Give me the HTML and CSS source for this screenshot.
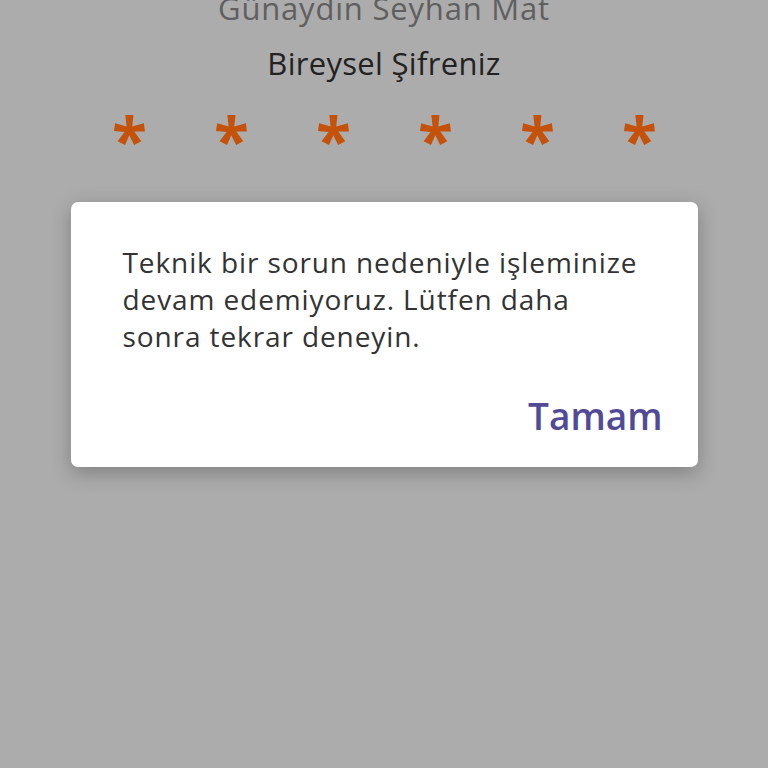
FILE: index.html
```html
<!DOCTYPE html>
<html lang="tr">
<head>
    <meta charset="UTF-8">
    <meta name="viewport" content="width=device-width, initial-scale=1.0">
    <title>Bireysel Şifreniz</title>
    <link rel="stylesheet" href="styles.css">
</head>
<body>
    <div class="screen">
        <div class="greeting">Günaydın Seyhan Mat</div>
        <div class="pin-title">Bireysel Şifreniz</div>
        <div class="pin-row">
            <span class="pin-dot">*</span>
            <span class="pin-dot">*</span>
            <span class="pin-dot">*</span>
            <span class="pin-dot">*</span>
            <span class="pin-dot">*</span>
            <span class="pin-dot">*</span>
        </div>

        <div class="dialog">
            <p class="dialog-text">Teknik bir sorun nedeniyle işleminize devam edemiyoruz. Lütfen daha sonra tekrar deneyin.</p>
            <div class="dialog-actions">
                <button class="dialog-btn">Tamam</button>
            </div>
        </div>
    </div>
</body>
</html>
```

FILE: styles.css
```css
* {
    box-sizing: border-box;
}

body {
    margin: 0;
    background-color: #acacac;
    font-family: 'Open Sans', 'Noto Sans', sans-serif;
}

.screen {
    width: 768px;
    height: 768px;
    overflow: hidden;
    display: flex;
    flex-direction: column;
    align-items: center;
}

.greeting {
    margin-top: -12px;
    font-size: 31px;
    letter-spacing: 0.8px;
    line-height: 40px;
    color: #5f5f5f;
}

.pin-title {
    margin-top: 13px;
    font-size: 31px;
    letter-spacing: 0.3px;
    line-height: 44px;
    color: #222222;
}

.pin-row {
    margin-top: 15px;
    display: flex;
    gap: 68px;
    height: 60px;
}

.pin-dot {
    width: 34px;
    text-align: center;
    font-size: 64px;
    font-weight: bold;
    line-height: 80px;
    color: #c4520a;
}

.dialog {
    margin-top: 42px;
    width: 627px;
    height: 265px;
    background-color: #ffffff;
    border-radius: 7px;
    box-shadow: 0 6px 20px rgba(0, 0, 0, 0.25);
    padding: 42px 35px 0 52px;
}

.dialog-text {
    margin: 0;
    max-width: 525px;
    font-size: 28px;
    letter-spacing: 0.9px;
    line-height: 37px;
    color: #333333;
}

.dialog-actions {
    display: flex;
    justify-content: flex-end;
    margin-top: 35px;
}

.dialog-btn {
    border: none;
    background: none;
    padding: 0;
    font-family: inherit;
    font-size: 37px;
    font-weight: 600;
    color: #524a96;
}
```
